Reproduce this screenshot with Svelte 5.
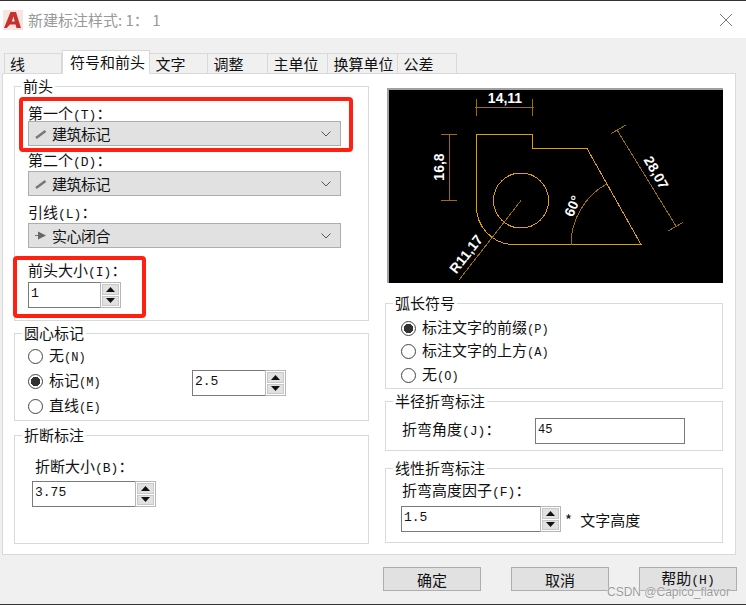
<script>
  const tabs = [
    { t: '线', w: 58 }, { t: '符号和前头', w: 88, active: true }, { t: '文字', w: 58 },
    { t: '调整', w: 60 }, { t: '主单位', w: 60 }, { t: '换算单位', w: 70 }, { t: '公差', w: 59 }
  ];
</script>

{#snippet spin()}
  <span class="spin">
    <span class="sb"><svg width="9" height="5" viewBox="0 0 9 5"><path d="M4.5 0L9 5H0z" fill="#111"/></svg></span>
    <span class="sb"><svg width="9" height="5" viewBox="0 0 9 5"><path d="M0 0H9L4.5 5z" fill="#111"/></svg></span>
  </span>
{/snippet}

{#snippet combo(text, solid)}
  <div class="combo">
    <svg class="ic" width="12" height="10" viewBox="0 0 12 10">
      {#if solid}
        <path d="M0 4H4V5H0z" fill="#777"/><path d="M3 0.5L11 4.5L3 8.5z" fill="#666"/>
      {:else}
        <path d="M1 9L10.5 2" stroke="#777" stroke-width="2.5"/>
      {/if}
    </svg>
    <span class="ct">{text}</span>
    <svg class="chev" width="10" height="6" viewBox="0 0 10 6"><path d="M0.5 0.5L5 5L9.5 0.5" fill="none" stroke="#555"/></svg>
  </div>
{/snippet}

{#snippet radio(text, key, on)}
  <div class="radio">
    <span class="dot" class:on></span><span>{text}<span class="k sm">{key}</span></span>
  </div>
{/snippet}

<div class="win">
  <header class="title">
    <span class="logo">
      <svg width="20" height="20" viewBox="0 0 20 20"><path d="M7.5 2H13L18 18H13.5L12.6 14.5H7L3.8 18H1zM11.7 11.5L10.5 6.5L8.8 11.5z" fill="#c4312f"/></svg>
    </span>
    <span class="ttxt">新建标注样式: 1： 1</span>
    <svg class="close" width="14" height="14" viewBox="0 0 14 14"><path d="M1 1L13 13M13 1L1 13" stroke="#777" fill="none"/></svg>
  </header>

  <main class="body">
    <nav class="tabs">
      {#each tabs as tab}
        <span class="tab" class:active={tab.active} style:width="{tab.w}px">{tab.t}</span>
      {/each}
    </nav>

    <section class="panel">
      <div class="col left">
        <div class="group g1">
          <div class="legend">前头</div>
          <div class="lab m1">第一个<span class="k">(T)</span>：</div>
          {@render combo('建筑标记', false)}
          <div class="lab m2">第二个<span class="k">(D)</span>：</div>
          {@render combo('建筑标记', false)}
          <div class="lab m3">引线<span class="k">(L)</span>：</div>
          {@render combo('实心闭合', true)}
          <div class="lab m4">前头大小<span class="k">(I)</span>：</div>
          <div class="spinner s1"><span class="inp">1</span>{@render spin()}</div>
        </div>

        <div class="group g2">
          <div class="legend">圆心标记</div>
          <div class="cm">
            <div class="radios">
              {@render radio('无', '(N)', false)}
              {@render radio('标记', '(M)', true)}
              {@render radio('直线', '(E)', false)}
            </div>
            <div class="spinner s2"><span class="inp">2.5</span>{@render spin()}</div>
          </div>
        </div>

        <div class="group g3">
          <div class="legend">折断标注</div>
          <div class="lab brk">折断大小<span class="k">(B)</span>：</div>
          <div class="spinner s3"><span class="inp">3.75</span>{@render spin()}</div>
        </div>
      </div>

      <div class="col right">
        <svg class="preview" width="336" height="195" viewBox="387 88 336 195" shape-rendering="crispEdges">
          <rect x="387" y="88" width="336" height="195" fill="#000"/>
          <path d="M387 88.5H723M387.5 88V283" stroke="#a0a0a0" stroke-width="2" fill="none"/>
          <g fill="none" stroke="#e0a000">
            <path d="M476.5 134.5H532.5V148.5H587L641 244.5H511A38 38 0 0 1 476.5 206.5Z"/>
            <circle cx="521" cy="200.5" r="27.5"/>
          </g>
          <g fill="none" stroke="#9a7000">
            <path d="M475 107.5H534M476.5 99V116M532.5 99V116"/>
            <path d="M449.5 134V201M441 134.5H457M441 200.5H457"/>
            <path d="M617 130L676 226M611 133.5L626 125M668 231L683 222.5"/>
            <path d="M521 200.5L459 280"/>
            <path d="M606.5 184A70 70 0 0 0 571 244.5"/>
          </g>
          <g class="dim" fill="#fff">
            <text x="505" y="103" text-anchor="middle">14,11</text>
            <text transform="translate(444 167) rotate(-90)" text-anchor="middle">16,8</text>
            <text transform="translate(652 175) rotate(60)" text-anchor="middle">28,07</text>
            <text transform="translate(470 257) rotate(-52)" text-anchor="middle">R11,17</text>
            <text transform="translate(577 208) rotate(-66)" text-anchor="middle">60°</text>
          </g>
        </svg>

        <div class="group g4">
          <div class="legend">弧长符号</div>
          <div class="arc">
            {@render radio('标注文字的前缀', '(P)', true)}
            {@render radio('标注文字的上方', '(A)', false)}
            {@render radio('无', '(O)', false)}
          </div>
        </div>

        <div class="group g5">
          <div class="legend">半径折弯标注</div>
          <div class="row5">
            <span class="lab l5">折弯角度<span class="k">(J)</span>：</span>
            <span class="inp box">45</span>
          </div>
        </div>

        <div class="group g6">
          <div class="legend">线性折弯标注</div>
          <div class="lab kf">折弯高度因子<span class="k">(F)</span>：</div>
          <div class="row6">
            <div class="spinner s6"><span class="inp">1.5</span>{@render spin()}</div>
            <span class="lab star">* 文字高度</span>
          </div>
        </div>
      </div>
    </section>

    <footer class="foot">
      <button>确定</button>
      <button>取消</button>
      <button>帮助<span class="k">(H)</span></button>
    </footer>
  </main>

  <div class="mark mark1"></div>
  <div class="mark mark2"></div>
  <div class="wm">CSDN @Capico_flavor</div>
</div>

<style>
  :global(body) { margin: 0; }
  .win {
    position: relative; width: 746px; height: 605px; box-sizing: border-box; overflow: hidden;
    display: flex; flex-direction: column; background: #f0f0f0;
    border-top: 1px solid #333; border-bottom: 1px solid #333;
    font: 15px/17px "Noto Sans CJK SC", "Liberation Mono", sans-serif; color: #111;
  }
  .k { font-family: "Liberation Mono", monospace; font-size: 13px; }
  .k.sm { font-size: 12px; }
  .title { height: 37px; flex: none; background: #fff; display: flex; align-items: center; padding-left: 3px; }
  .logo { width: 20px; height: 20px; background: #f8e4e0; display: flex; margin-right: 5px; }
  .ttxt { color: #999; flex: 1; }
  .close { margin-right: 13px; }

  .body { flex: 1; display: flex; flex-direction: column; padding: 13px 9px 0 2px; }
  .tabs { display: flex; align-items: flex-end; height: 23px; padding-left: 2px; margin-bottom: -1px; position: relative; }
  .tab {
    box-sizing: border-box; height: 21px; background: #f0f0f0; border: 1px solid #d9d9d9; border-left-width: 0;
    padding-left: 5.5px; line-height: 19px; white-space: nowrap;
  }
  .tab:first-child { border-left-width: 1px; padding-left: 5px; }
  .tab.active { height: 24px; background: #fff; border-left-width: 1px; border-bottom-color: #fff; padding-left: 7px; line-height: 22px; }

  .panel {
    box-sizing: border-box; height: 482px; background: #fff; border: 1px solid #d9d9d9;
    display: flex; gap: 16px; padding: 12px 0 0 11px; margin-right: 1px;
  }
  .left { width: 355px; }
  .right { width: 338px; }
  .col { display: flex; flex-direction: column; }

  .group { box-sizing: border-box; border: 1px solid #d9d9d9; flex: none; }
  .legend { width: max-content; background: #fff; margin: -9px 0 0 7px; padding: 0 2px; height: 16px; line-height: 16px; }
  .g1 { height: 235px; padding: 9px 13px 0; }
  .g1 .legend { margin-top: -18px; margin-left: -7px; }
  .lab { white-space: nowrap; height: 17px; }
  .m1 { margin-top: 10px; }
  .m2 { margin: 5px 0 3px; }
  .m3 { margin: 7px 0 3px; }
  .m4 { margin: 13px 0 4px; }

  .combo {
    box-sizing: border-box; width: 313px; height: 25px; background: #e1e1e1; border: 1px solid #adadad;
    display: flex; align-items: center; padding: 0 9px 0 6px;
  }
  .ic { flex: none; margin-right: 5px; }
  .ct { flex: 1; letter-spacing: -0.5px; }

  .spinner { box-sizing: border-box; display: flex; height: 26px; }
  .inp {
    box-sizing: border-box; flex: 1; height: 26px; border: 1px solid #7a7a7a; border-right-width: 0;
    font-family: "Liberation Mono", monospace; font-size: 13px; line-height: 22px; padding-left: 2px; background: #fff;
  }
  .box { display: block; width: 150px; flex: none; border-right-width: 1px; font-size: 12px; }
  .spin { width: 21px; flex: none; box-sizing: border-box; border: 1px solid #b5b5b5; padding: 1px; display: flex; flex-direction: column; gap: 1px; background: #fff; }
  .sb { flex: 1; background: #e1e1e1; border: 1px solid #c8c8c8; display: flex; align-items: center; justify-content: center; }
  .s1 { width: 93px; }
  .s2 { width: 94px; margin-top: 29px; }
  .s3 { width: 124px; margin: 7px 0 0 17px; }
  .s6 { width: 160px; flex: none; }

  .g2 { height: 88px; margin-top: 12px; }
  .cm { display: flex; padding-left: 13px; }
  .radios { width: 164px; padding-top: 6px; display: flex; flex-direction: column; gap: 7px; }
  .radio { display: flex; align-items: center; height: 18px; white-space: nowrap; }
  .dot { box-sizing: border-box; width: 15px; height: 15px; border: 1px solid #444; border-radius: 50%; background: #fff; margin-right: 6px; flex: none; }
  .dot.on { background: radial-gradient(circle, #333 0 4.5px, #fff 5px); }

  .g3 { height: 109px; margin-top: 14px; }
  .brk { margin: 14px 0 0 20px; }

  .preview { margin: 2px 0 0 2px; }
  .g4 { height: 86px; margin-top: 20px; }
  .arc { padding: 8px 0 0 15px; display: flex; flex-direction: column; gap: 5.5px; }
  .g5 { height: 50px; margin-top: 12px; }
  .row5 { box-sizing: border-box; display: flex; align-items: center; justify-content: space-between; width: 299px; padding-left: 16px; margin-top: 9px; }
  .l5 { margin-bottom: 6px; }
  .g6 { height: 75px; margin-top: 17px; }
  .kf { margin: 5px 0 0 16px; }
  .row6 { display: flex; align-items: center; padding-left: 15px; margin-top: 8px; }
  .star { margin: 1px 0 0 4px; word-spacing: 5px; }

  .foot { display: flex; justify-content: flex-end; gap: 30px; padding: 12px 0 0; }
  button {
    box-sizing: border-box; width: 98px; height: 24px; padding: 0; background: #e1e1e1; border: 1px solid #adadad; border-radius: 0;
    font: inherit; color: #111;
  }

  .mark { position: absolute; box-sizing: border-box; border: 4px solid #ff2012; border-radius: 4px; }
  .mark1 { left: 19px; top: 96px; width: 334px; height: 55px; }
  .mark2 { left: 13px; top: 255px; width: 133px; height: 62px; }
  .wm {
    position: absolute; left: 607px; top: 583px; font: 12px/16px "Liberation Sans", sans-serif; color: #9a9a9a;
    text-shadow: 0 0 1px #fff, 0 0 1px #fff; white-space: nowrap;
  }
  .dim text { font: bold 14px "Liberation Sans", sans-serif; }
</style>
